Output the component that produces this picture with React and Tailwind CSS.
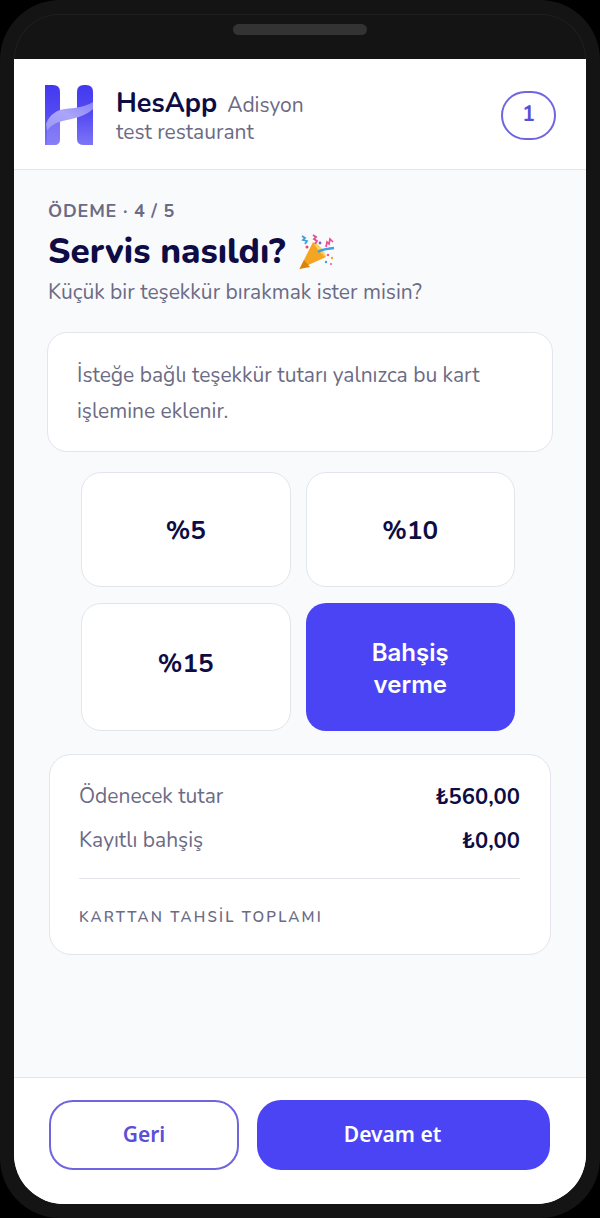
import React from 'react';

const HLogo = () => (
  <svg width="48" height="60" viewBox="0 0 48 60" className="shrink-0 mt-[2px]">
    <defs>
      <linearGradient id="stem" x1="0" y1="0" x2="0" y2="1">
        <stop offset="0" stopColor="#4338f0" />
        <stop offset="0.5" stopColor="#554bf3" />
        <stop offset="1" stopColor="#7d75f6" />
      </linearGradient>
      <linearGradient id="wave" x1="0" y1="1" x2="1" y2="0">
        <stop offset="0" stopColor="#9d97f8" />
        <stop offset="0.5" stopColor="#aaa5fa" />
        <stop offset="1" stopColor="#8a83f7" />
      </linearGradient>
    </defs>
    <path d="M0 0H8Q15 0 15 7V54Q15 60 9 60H0Z" fill="url(#stem)" />
    <path d="M32 7Q32 0 39 0H41Q48 0 48 7V60H39Q32 60 32 54Z" fill="url(#stem)" />
    <path d="M1 39C5 29 12 25 20 24C30 23 40 22 48 17V24C42 30 32 33 22 35C12 37 6 40 2 46Z" fill="url(#wave)" />
    <path d="M2 46C6 40 12 37 15 36.5V54Q15 60 9 60H2Z" fill="#8f88f7" opacity="0.55" />
  </svg>
);

const Party = () => (
  <svg width="36" height="36" viewBox="0 0 36 36" className="shrink-0">
    <path d="M0.5 35L14 8L27 23Z" fill="#f4a521" />
    <path d="M0.5 35L5 26L11 33Z" fill="#d9820f" />
    <path d="M14 8C19 9 26 17 27 23C22 20 17 14 14 8Z" fill="#fbd15c" />
    <path d="M19 18C23 15 28 15 35 14" stroke="#3f9fe0" strokeWidth="2.4" fill="none" />
    <path d="M3 2l3 2-2 2 4 1-2 3" stroke="#3f9fe0" strokeWidth="1.8" fill="none" />
    <path d="M14 1l3 2-2 2 3 2-2 3" stroke="#ec4f93" strokeWidth="1.9" fill="none" />
    <path d="M27 13l1-5 2 2 1-5 3 3" stroke="#ec4f93" strokeWidth="1.7" fill="none" />
    <circle cx="8" cy="13" r="1.5" fill="#e0486b" />
    <circle cx="21" cy="9" r="1.4" fill="#7a5fd0" />
    <circle cx="29" cy="21" r="1.3" fill="#ec5f9a" />
    <circle cx="33" cy="24" r="1.2" fill="#f5a623" />
    <circle cx="27" cy="28" r="1.2" fill="#3f9fe0" />
    <circle cx="32" cy="30" r="1.1" fill="#ec5f9a" />
  </svg>
);

const TipOption = ({ children, selected, className = '' }) => (
  <button
    className={
      selected
        ? `rounded-[20px] bg-[#4b44f5] text-white text-[24px] leading-[32px] font-semibold font-["Inter",sans-serif] ${className}`
        : `rounded-[20px] bg-white border border-[#e3e5ec] text-[#0e0c45] text-[26px] font-bold ${className}`
    }
  >
    {children}
  </button>
);

const SummaryRow = ({ label, value }) => (
  <div className="flex items-center justify-between h-[44px]">
    <span className="text-[21px] text-[#6b6b85]">{label}</span>
    <span className="text-[22px] font-bold text-[#0e0c45]">{value}</span>
  </div>
);

export default function App() {
  return (
    <div className='w-[600px] h-[1218px] bg-black overflow-hidden font-["Nunito","Lato",sans-serif]'>
      <div className="h-full rounded-[60px] bg-[#141414] px-[14px] pt-[59px] pb-[14px] relative">
        <div className="absolute top-[14px] left-[14px] right-[14px] h-[45px] rounded-t-[46px] border-t border-x border-[#1f1f1f]" />
        <div className="absolute top-[24px] left-[233px] w-[134px] h-[11px] rounded-full bg-[#333333]" />
        <div className="h-full bg-[#f9fafc] rounded-b-[50px] overflow-hidden flex flex-col">
          <header className="h-[111px] shrink-0 bg-white border-b border-[#e4e5ea] flex items-center pl-[31px] pr-[30px]">
            <HLogo />
            <div className="ml-[23px] flex-1">
              <div className="flex items-baseline gap-[10px] h-[32px] mt-[4px]">
                <span className="text-[27px] font-bold text-[#0e0c45] leading-[32px]">HesApp</span>
                <span className="text-[21px] leading-[26px] text-[#6b6b85]">Adisyon</span>
              </div>
              <div className="text-[21px] leading-[24px] text-[#6b6b85]">test restaurant</div>
            </div>
            <div className="w-[55px] h-[49px] mt-[2px] rounded-full border-2 border-[#6f65de] flex items-center justify-center text-[21px] font-bold text-[#5b4fd8]">
              1
            </div>
          </header>

          <main className="flex-1 pt-[29px]">
            <div className="pl-[34px]">
              <div className="text-[18px] leading-[24px] font-bold tracking-[0.85px] text-[#6b6b85]">ÖDEME · 4 / 5</div>
              <h1 className="flex items-center gap-[14px] h-[44px] mt-[7px] text-[35px] font-extrabold text-[#0e0c45]">
                Servis nasıldı? <Party />
              </h1>
              <p className="text-[21px] leading-[28px] text-[#6b6b85] mt-[4px]">Küçük bir teşekkür bırakmak ister misin?</p>
            </div>

            <div className="mx-[33px] mt-[26px] h-[120px] rounded-[20px] bg-white border border-[#e3e5ec] px-[29px] pt-[2px] flex items-center">
              <p className="text-[21px] leading-[36px] text-[#6b6b85]">
                İsteğe bağlı teşekkür tutarı yalnızca bu kart işlemine eklenir.
              </p>
            </div>

            <div className="ml-[67px] w-[434px] mt-[20px] grid grid-cols-2 gap-x-[15px] gap-y-[16px] grid-rows-[115px_128px]">
              <TipOption className="pt-[2px]">%5</TipOption>
              <TipOption className="pt-[2px]">%10</TipOption>
              <TipOption className="pb-[8px]">%15</TipOption>
              <TipOption selected className="pt-[3px]">
                Bahşiş
                <br />
                verme
              </TipOption>
            </div>

            <div className="mx-[35px] mt-[23px] h-[201px] rounded-[22px] bg-white border border-[#e3e5ec] pl-[29px] pr-[30px] pt-[20px]">
              <SummaryRow label="Ödenecek tutar" value="₺560,00" />
              <SummaryRow label="Kayıtlı bahşiş" value="₺0,00" />
              <div className="border-t border-[#e4e5ea] mt-[15px] pt-[28px] text-[15px] leading-[20px] font-semibold tracking-[2.2px] text-[#6b6b85]">
                KARTTAN TAHSİL TOPLAMI
              </div>
            </div>
          </main>

          <footer className='h-[127px] shrink-0 bg-white border-t border-[#e4e5ea] pt-[22px] pl-[35px] pr-[36px] flex gap-[18px] items-start font-["Noto_Sans",sans-serif]'>
            <button className="w-[190px] h-[70px] rounded-[24px] border-2 border-[#6f65de] text-[#5b4fd8] text-[21px] font-semibold">
              Geri
            </button>
            <button className="flex-1 h-[70px] pr-[22px] rounded-[24px] bg-[#4b44f5] text-white text-[21px] font-semibold">
              Devam et
            </button>
          </footer>
        </div>
      </div>
    </div>
  );
}
